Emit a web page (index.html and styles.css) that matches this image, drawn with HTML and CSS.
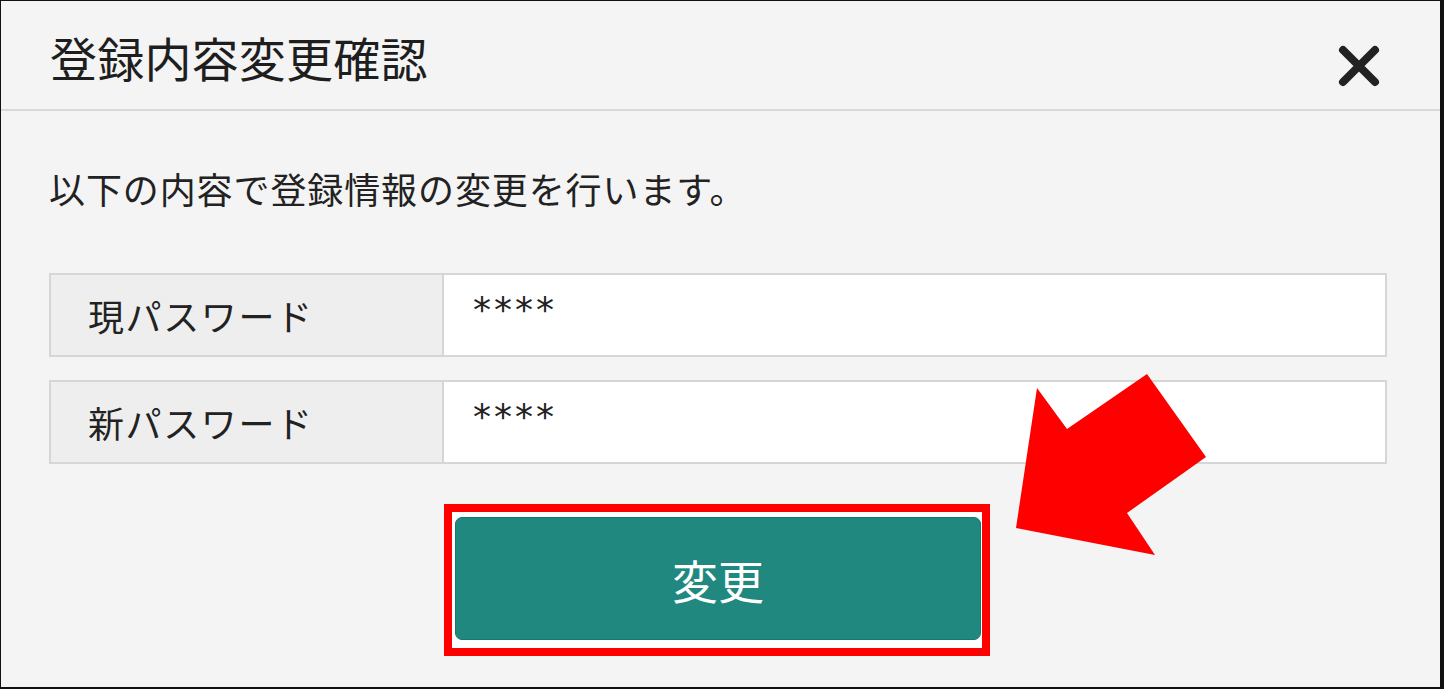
FILE: index.html
```html
<!DOCTYPE html>
<html lang="ja">
<head>
  <meta charset="UTF-8">
  <meta name="viewport" content="width=device-width, initial-scale=1.0">
  <title>登録内容変更確認</title>
  <link rel="stylesheet" href="styles.css">
</head>
<body>
  <div class="frame">
    <div class="modal-head">
      <h1 class="modal-title">登録内容変更確認</h1>
      <button class="close" type="button" aria-label="閉じる">
        <svg width="42" height="42" viewBox="0 0 42 42">
          <path d="M5 5 L37 37 M37 5 L5 37" stroke="#222" stroke-width="8" stroke-linecap="round" fill="none"/>
        </svg>
      </button>
    </div>
    <div class="modal-body">
      <p class="lead">以下の内容で登録情報の変更を行います。</p>
      <div class="rows">
        <div class="row">
          <div class="label">現パスワード</div>
          <div class="value">****</div>
        </div>
        <div class="row">
          <div class="label">新パスワード</div>
          <div class="value">****</div>
        </div>
      </div>
      <div class="mark">
        <button class="submit" type="button">変更</button>
      </div>
    </div>
    <!-- 注釈の矢印 -->
    <svg class="arrow" width="1444" height="689" viewBox="0 0 1444 689">
      <polygon points="1016,528 1037,388 1067,429 1147,374 1206,457 1127,513 1155,555" fill="#ff0000"/>
    </svg>
  </div>
</body>
</html>
```

FILE: styles.css
```css
*{
  margin: 0;
  padding: 0;
  box-sizing: border-box;
}
body{
  background-color: #f4f4f4;
  font-family: "Noto Sans CJK JP", "Noto Sans", sans-serif;
  color: #222;
}
.frame{
  position: relative;
  width: 1444px;
  height: 689px;
  background-color: #f4f4f4;
  border-top: 1px solid #111;
  border-left: 1px solid #111;
  border-right: 4px solid #111;
  border-bottom: 2px solid #111;
  overflow: hidden;
}
.modal-head{
  display: flex;
  align-items: center;
  height: 110px;
  padding: 2px 0 0 49px;
  border-bottom: 2px solid #d9d9d9;
}
.modal-title{
  font-size: 47px;
  font-weight: 400;
  line-height: 1;
  color: #1e1e1e;
  letter-spacing: 0.2px;
}
.close{
  display: flex;
  margin-left: auto;
  margin-right: 60px;
  margin-top: 20px;
  border: none;
  background: none;
}
.modal-body{
  padding-left: 48px;
}
.lead{
  margin-top: 59px;
  font-size: 36px;
  line-height: 1;
  color: #222;
  letter-spacing: 0.9px;
}
.rows{
  width: 1338px;
  margin-top: 67px;
}
.row{
  display: grid;
  grid-template-columns: 393px 1fr;
  height: 84px;
  border: 2px solid #d6d6d6;
}
.row + .row{
  margin-top: 23px;
}
.label{
  display: flex;
  align-items: center;
  padding-left: 37px;
  background-color: #eeeeee;
  border-right: 2px solid #d6d6d6;
  font-size: 36px;
  letter-spacing: 1.6px;
  color: #222;
}
.value{
  display: flex;
  align-items: center;
  padding: 0 0 12px 29px;
  background-color: #fff;
  font-family: "DejaVu Sans", sans-serif;
  font-size: 36px;
  letter-spacing: 3px;
  color: #222;
}
/* 赤枠の注釈 */
.mark{
  width: 546px;
  margin: 40px 0 0 395px;
  padding: 5px 1px 8px 3px;
  border: 8px solid #ff0000;
  background-color: #fff;
}
.submit{
  display: block;
  width: 526px;
  height: 123px;
  border: 1px solid #17766f;
  border-radius: 7px;
  background-color: #20887f;
  color: #fff;
  font-family: "Noto Sans CJK JP", "Noto Sans", sans-serif;
  font-size: 46px;
  line-height: 1;
  cursor: pointer;
}
.arrow{
  position: absolute;
  left: -1px;
  top: -1px;
  pointer-events: none;
}
```
